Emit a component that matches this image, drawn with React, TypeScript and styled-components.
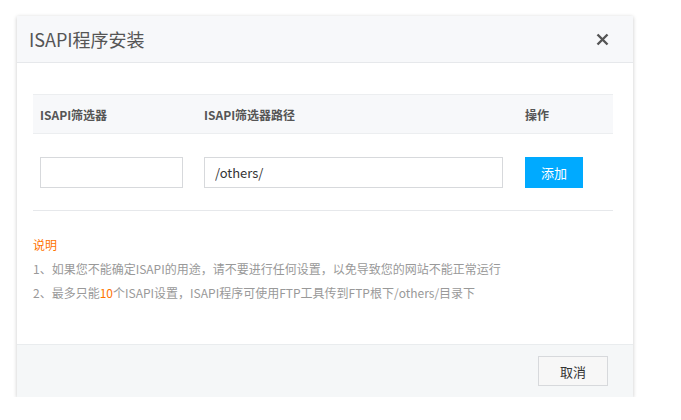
import React from 'react';
import styled, { createGlobalStyle } from 'styled-components';

const Global = createGlobalStyle`
  body { margin: 0; background: #fff; font-family: "Noto Sans CJK SC", "Liberation Sans", sans-serif; }
`;

const Page = styled.div`
  padding: 16px 0 0 17px;
`;

const Dialog = styled.div`
  width: 616px;
  background: #fff;
  box-shadow: 0 1px 4px rgba(0, 0, 0, 0.22);
`;

const Header = styled.div`
  height: 47px;
  box-sizing: border-box;
  background: #f7f8fa;
  border-bottom: 1px solid #e6e8eb;
  display: flex;
  align-items: center;
  justify-content: space-between;
  padding: 0 24px 0 12px;
`;

const Title = styled.div`
  font-size: 18px;
  color: #555;
`;

const Close = styled.button`
  border: 0;
  background: none;
  padding: 0;
  display: flex;
  cursor: pointer;
`;

const Body = styled.div`
  padding: 31px 20px 0 16px;
  height: 281px;
  box-sizing: border-box;
`;

const Grid = styled.div`
  display: grid;
  grid-template-columns: 164px 321px 1fr;
`;

const HeadCell = styled.div`
  height: 40px;
  background: #f7f8fa;
  border-top: 1px solid #eceef0;
  border-bottom: 1px solid #eceef0;
  box-sizing: border-box;
  display: flex;
  align-items: center;
  padding-left: 7px;
  font-size: 12px;
  font-weight: bold;
  color: #555;
`;

const Cell = styled.div`
  height: 77px;
  border-bottom: 1px solid #e6e8eb;
  box-sizing: border-box;
  display: flex;
  align-items: center;
  padding-left: 7px;
`;

const Input = styled.input<{ $w: number }>`
  width: ${(p) => p.$w}px;
  height: 31px;
  box-sizing: border-box;
  border: 1px solid #d7d9dc;
  padding: 0 10px;
  font-size: 13px;
  color: #333;
  font-family: inherit;
  outline: none;
`;

const AddButton = styled.button`
  width: 58px;
  height: 31px;
  border: 0;
  background: #00aaff;
  color: #fff;
  font-size: 13px;
  font-family: inherit;
`;

const Notes = styled.div`
  padding-top: 22px;
  font-size: 12px;
  color: #999;
  line-height: 24px;
`;

const NoteTitle = styled.div`
  color: #ff7300;
`;

const Em = styled.span`
  color: #ff7300;
`;

const Footer = styled.div`
  height: 53px;
  box-sizing: border-box;
  background: #f5f7f8;
  border-top: 1px solid #e9ecee;
  display: flex;
  align-items: center;
  justify-content: flex-end;
  padding-right: 25px;
`;

const CancelButton = styled.button`
  width: 70px;
  height: 30px;
  border: 1px solid #d7d9dc;
  background: #f7f7f7;
  color: #333;
  font-size: 13px;
  font-family: inherit;
`;

export default function App() {
  return (
    <Page>
      <Global />
      <Dialog>
        <Header>
          <Title>ISAPI程序安装</Title>
          <Close>
            <svg width="13" height="13" viewBox="0 0 13 13">
              <path d="M1.5 1.5l10 10M11.5 1.5l-10 10" stroke="#555" strokeWidth="2.4" />
            </svg>
          </Close>
        </Header>
        <Body>
          <Grid>
            <HeadCell>ISAPI筛选器</HeadCell>
            <HeadCell>ISAPI筛选器路径</HeadCell>
            <HeadCell>操作</HeadCell>
            <Cell>
              <Input $w={143} />
            </Cell>
            <Cell>
              <Input $w={299} defaultValue="/others/" />
            </Cell>
            <Cell>
              <AddButton>添加</AddButton>
            </Cell>
          </Grid>
          <Notes>
            <NoteTitle>说明</NoteTitle>
            <div>1、如果您不能确定ISAPI的用途，请不要进行任何设置，以免导致您的网站不能正常运行</div>
            <div>
              2、最多只能<Em>10</Em>个ISAPI设置，ISAPI程序可使用FTP工具传到FTP根下/others/目录下
            </div>
          </Notes>
        </Body>
        <Footer>
          <CancelButton>取消</CancelButton>
        </Footer>
      </Dialog>
    </Page>
  );
}
